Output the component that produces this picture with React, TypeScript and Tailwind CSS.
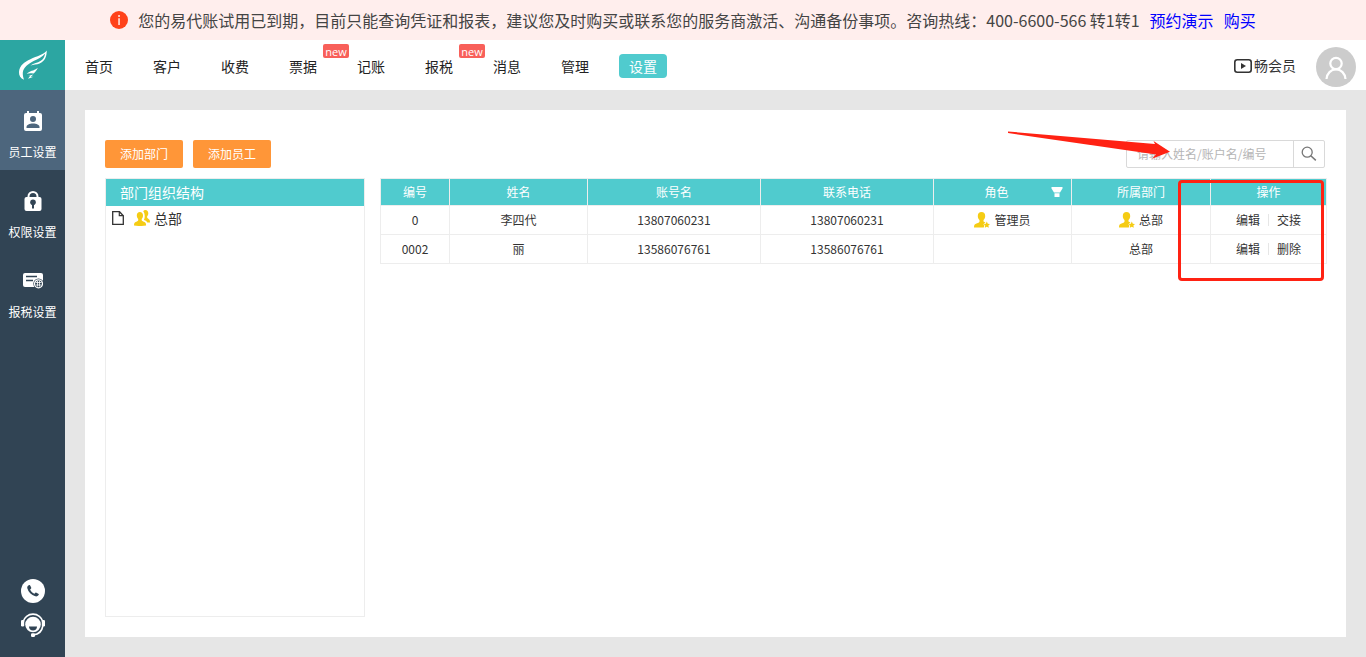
import { useState } from "react";
import type { ReactNode } from "react";

type NavItem = { label: string; isNew?: boolean };

type Employee = {
  code: string;
  name: string;
  account: string;
  phone: string;
  role: string;
  department: string;
  isManager: boolean;
  actions: string[];
};

const NAV_ITEMS: NavItem[] = [
  { label: "首页" },
  { label: "客户" },
  { label: "收费" },
  { label: "票据", isNew: true },
  { label: "记账" },
  { label: "报税", isNew: true },
  { label: "消息" },
  { label: "管理" },
  { label: "设置" },
];

const EMPLOYEES: Employee[] = [
  {
    code: "0",
    name: "李四代",
    account: "13807060231",
    phone: "13807060231",
    role: "管理员",
    department: "总部",
    isManager: true,
    actions: ["编辑", "交接"],
  },
  {
    code: "0002",
    name: "丽",
    account: "13586076761",
    phone: "13586076761",
    role: "",
    department: "总部",
    isManager: false,
    actions: ["编辑", "删除"],
  },
];

const LogoIcon = () => (
  <svg width="30" height="30" viewBox="0 0 30 30" fill="#fff" aria-hidden="true">
    <path d="M28.800 0.600C28.600 7 27 11.200 21.600 13.400C18.600 14.600 15.600 14.400 12.400 15.600C16 13.200 19.600 12.800 22.400 11C25.200 9.200 26.600 6.800 27.200 3.400C24.600 7 20 8.600 15.600 11C9.600 14.200 5.600 17.400 4.800 22.400C4.600 25 5.200 27 6 29.800C2.600 28.400 0.800 25.600 1 22C1.400 15.400 6.400 12 12.400 9.200C19 6.200 25.600 4.800 28.800 0.600Z" />
    <path d="M19.800 17.800C18.800 20.200 17.600 21.600 15.600 23.600L13.400 23.200C11.800 23 10.400 23.200 8.600 23.800C11 21.400 13.400 20.800 15.200 20.400C17 19.800 18.600 19 19.800 17.800Z" />
    <path d="M15.200 24.400L12.800 27L15.600 26.800L10 28.800L12.200 25.800L10 25.800C12 25.400 13.600 25 15.200 24.400Z" />
  </svg>
);

const StaffIcon = () => (
  <svg width="18" height="20" viewBox="0 0 18 20" aria-hidden="true">
    <path
      fill="#fff"
      d="M3 0h2v2h8V0h2v2h1a2 2 0 0 1 2 2v14a2 2 0 0 1-2 2H2a2 2 0 0 1-2-2V4a2 2 0 0 1 2-2h1z"
    />
    <circle cx="9" cy="8" r="3" fill="#4d667d" />
    <path fill="#4d667d" d="M2.500 17v-1c0-2 3-3.400 6.500-3.400s6.500 1.400 6.500 3.400v1z" />
  </svg>
);

const LockIcon = () => (
  <svg width="18" height="20" viewBox="0 0 18 20" aria-hidden="true">
    <path d="M4.500 8V5.500a4.500 4.500 0 0 1 9 0V8" fill="none" stroke="#fff" strokeWidth="2" />
    <rect x="0.500" y="6" width="17" height="14" rx="2" fill="#fff" />
    <circle cx="9" cy="11.300" r="2.800" fill="#314454" />
    <path d="M8 12h2v5.500H8z" fill="#314454" />
  </svg>
);

const TaxIcon = () => (
  <svg width="20" height="16" viewBox="0 0 20 16" aria-hidden="true">
    <rect width="20" height="14" rx="2" fill="#fff" />
    <path d="M3 3.500h11M3 7.500h7" stroke="#314454" strokeWidth="1.400" />
    <circle cx="15.500" cy="10.800" r="5.200" fill="#314454" />
    <circle cx="15.500" cy="10.800" r="4" fill="none" stroke="#fff" strokeWidth="1.200" />
    <path
      d="M12.500 9.500h6M12.500 12h6M14.500 8v5.600M16.500 8v5.600"
      stroke="#fff"
      strokeWidth="0.800"
    />
  </svg>
);

const PhoneIcon = () => (
  <svg width="24" height="24" viewBox="0 0 24 24" aria-hidden="true">
    <circle cx="12" cy="12" r="12" fill="#fff" />
    <path
      fill="#314454"
      d="M7.800 6.300c.6-.4 1.200-.2 1.500.4l.9 1.800c.2.500.1.900-.3 1.200l-.8.700c.7 1.900 2.300 3.500 4.300 4.300l.8-.8c.4-.3.800-.4 1.200-.2l1.900 1c.6.300.7.900.3 1.400-.8 1.100-2 1.600-3.300 1.200-4-1.200-6.900-4.200-8-8-.300-1.300.300-2.300 1.500-3z"
    />
  </svg>
);

const ServiceIcon = () => (
  <svg width="24" height="24" viewBox="0 0 24 24" aria-hidden="true">
    <circle cx="12" cy="11.500" r="7.800" fill="#fff" />
    <path d="M2 9a10.300 10.300 0 0 1 20 0" fill="none" stroke="#fff" strokeWidth="1.600" />
    <path d="M21.800 13c-.8 5-4.300 8.300-9.300 8.900" fill="none" stroke="#fff" strokeWidth="1.600" />
    <rect y="7" width="3.200" height="6.500" rx="1.200" fill="#fff" />
    <rect x="20.800" y="7" width="3.200" height="6.500" rx="1.200" fill="#fff" />
    <rect x="10" y="20.300" width="4" height="3.600" rx="1.200" fill="#fff" />
    <path d="M8 13.500h8c0 2.400-1.700 4-4 4s-4-1.600-4-4z" fill="#314454" />
  </svg>
);

const ManagerIcon = () => (
  <svg width="16" height="16" viewBox="0 0 16 16" fill="#f5cc14" aria-hidden="true">
    <path d="M7.500 0C9.800 0 11.200 1.500 11.200 4c0 1.700-.6 3.200-1.700 4.100v1.500c.6.500 1.300.7 1.900 1l-2 1.700 1 1.300-.6 2H0c0-2.200.4-3.300 2-3.900 1.400-.5 2.800-1 3.500-2V8.100C4.400 7.200 3.800 5.700 3.800 4c0-2.500 1.400-4 3.700-4z" />
    <path d="M12.800 9.500l1 2.200 2.200.3-1.600 1.500.4 2.300-2-1.100-2 1.100.4-2.300-1.600-1.500 2.200-.3z" />
  </svg>
);

const GroupIcon = () => (
  <svg width="16" height="16" viewBox="0 0 16 16" fill="#f5cc14" aria-hidden="true">
    <path d="M5.900 2c1.900 0 3.100 1.400 3.100 3.500 0 1.500-.5 2.700-1.300 3.500v1.200c.7 1 1.800 1.300 2.700 1.700 1.300.5 1.700 1.700 1.700 3.600-3.500.7-8.600.7-12.100 0 0-1.900.4-3.100 1.700-3.600 1-.4 2-.7 2.500-1.700V9c-.8-.8-1.400-2-1.400-3.500C2.800 3.400 4 2 5.900 2z" />
    <path d="M9.200 1.200C9.800.4 10.500 0 11.400 0c1.800 0 2.900 1.300 2.900 3.300 0 1.300-.5 2.400-1.200 3.200v1c.5.900 1.100 1.200 1.800 1.700.9.600 1.100 1.600 1.100 3.400h-2.700c-.4-1-1.200-1.600-2-2-.6-.2-1-.4-1.400-.8.600-1.100.9-2.600.8-4.100-.1-1.900-.5-3.400-1.500-4.500z" />
  </svg>
);

const FileIcon = () => (
  <svg width="12" height="14" viewBox="0 0 12 14" aria-hidden="true">
    <path d="M.7.700h6.800l3.800 4v8.600H.7z" fill="none" stroke="#333" strokeWidth="1.300" />
    <path d="M7.300.700v4h4" fill="none" stroke="#333" strokeWidth="1.200" />
  </svg>
);

const SearchIcon = () => (
  <svg width="16" height="16" viewBox="0 0 16 16" fill="none" stroke="#777" aria-hidden="true">
    <circle cx="6.200" cy="6.200" r="5" strokeWidth="1.300" />
    <path d="M9.800 9.800l5 4.600" strokeWidth="1.500" />
  </svg>
);

const SideLink = ({
  label,
  active,
  children,
}: {
  label: string;
  active?: boolean;
  children: ReactNode;
}) => (
  <a
    href="#"
    className={`flex h-20 flex-col items-center pt-[19px] text-xs text-white ${active ? "bg-[#4d667d]" : ""}`}
  >
    <span className="flex h-6 items-center">{children}</span>
    <span className="mt-[11px] leading-4">{label}</span>
  </a>
);

const CELL = "border border-[#ededed] text-center";

const App = () => {
  const [activeNav, setActiveNav] = useState("设置");
  const [keyword, setKeyword] = useState("");

  return (
    <div className="flex min-h-screen flex-col bg-[#e6e6e6] font-['Noto_Sans_CJK_SC',sans-serif] text-xs text-[#333]">
      <div className="flex h-10 items-center justify-center bg-[#ffeeed] text-base whitespace-nowrap text-[#444]">
        <svg width="18" height="18" viewBox="0 0 18 18" className="mr-2.5" aria-hidden="true">
          <circle cx="9" cy="9" r="9" fill="#ff421a" />
          <path d="M8.200 4h1.700v2H8.200zM8.200 7.300h1.700V14H8.200z" fill="#ffd9d2" />
        </svg>
        <p>
          您的易代账试用已到期，目前只能查询凭证和报表，建议您及时购买或联系您的服务商激活、沟通备份事项。咨询热线：400-6600-566
          转1转1
        </p>
        <a href="#" className="ml-2.5 text-[#0000ff]">
          预约演示
        </a>
        <a href="#" className="ml-2.5 text-[#0000ff]">
          购买
        </a>
      </div>

      <div className="flex flex-1">
        <aside className="flex w-[65px] shrink-0 flex-col bg-[#314454]">
          <a
            href="#"
            aria-label="首页"
            className="flex h-[50px] items-center justify-center bg-[#2ca6a2]"
          >
            <LogoIcon />
          </a>
          <SideLink label="员工设置" active>
            <StaffIcon />
          </SideLink>
          <SideLink label="权限设置">
            <LockIcon />
          </SideLink>
          <SideLink label="报税设置">
            <TaxIcon />
          </SideLink>
          <div className="mt-auto flex flex-col items-center gap-2.5 pb-5">
            <button type="button" aria-label="电话">
              <PhoneIcon />
            </button>
            <button type="button" aria-label="客服">
              <ServiceIcon />
            </button>
          </div>
        </aside>

        <div className="flex min-w-0 flex-1 flex-col">
          <header className="flex h-[50px] items-center justify-between bg-white px-2.5">
            <nav className="flex gap-5 pt-0.5 text-sm text-[#222]">
              {NAV_ITEMS.map((item) => (
                <button
                  key={item.label}
                  type="button"
                  onClick={() => setActiveNav(item.label)}
                  className={`relative h-6 rounded-sm px-2.5 leading-[22px] ${
                    item.label === activeNav ? "bg-[#50cbce] text-white" : ""
                  }`}
                >
                  {item.label}
                  {item.isNew && (
                    <span className="absolute -top-2.5 left-full -ml-1 h-3.5 w-[26px] rounded-xs bg-[#f8605a] text-center font-['Open_Sans',sans-serif] text-[11px] leading-[15px] text-white">
                      new
                    </span>
                  )}
                </button>
              ))}
            </nav>
            <div className="flex items-center gap-5">
              <a href="#" className="flex items-center gap-0.5 text-sm">
                <svg width="18" height="14" viewBox="0 0 18 14" className="mt-0.5" aria-hidden="true">
                  <rect
                    x="0.800"
                    y="0.800"
                    width="16.400"
                    height="12.400"
                    rx="2.500"
                    fill="none"
                    stroke="#333"
                    strokeWidth="1.600"
                  />
                  <path d="M7 4l5 3-5 3z" fill="#333" />
                </svg>
                畅会员
              </a>
              <button type="button" aria-label="个人中心" className="mt-1">
                <svg width="40" height="40" viewBox="0 0 40 40" aria-hidden="true">
                  <circle cx="20" cy="20" r="20" fill="#ccc" />
                  <g fill="none" stroke="#fff" strokeWidth="2.200">
                    <circle cx="20" cy="16.500" r="5.700" />
                    <path d="M10.500 32c.4-5.500 4.400-9.600 9.500-9.600s9.100 4.100 9.500 9.600" />
                  </g>
                </svg>
              </button>
            </div>
          </header>

          <main className="relative m-5 flex flex-1 flex-col bg-white px-5 pt-[30px] pb-5">
            <div className="flex items-center justify-between">
              <div className="flex gap-2.5">
                <button type="button" className="h-7 w-[78px] rounded-xs bg-[#ff9638] text-white">
                  添加部门
                </button>
                <button type="button" className="h-7 w-[78px] rounded-xs bg-[#ff9638] text-white">
                  添加员工
                </button>
              </div>
              <form
                className="mr-px flex h-7 w-[199px] rounded-xs border border-[#d9d9d9]"
                onSubmit={(event) => event.preventDefault()}
              >
                <input
                  type="text"
                  aria-label="搜索员工"
                  placeholder="请输入姓名/账户名/编号"
                  value={keyword}
                  onChange={(event) => setKeyword(event.target.value)}
                  className="min-w-0 flex-1 px-2.5 outline-none placeholder:text-[#b5b5b5]"
                />
                <button
                  type="submit"
                  aria-label="搜索"
                  className="flex w-[31px] items-center justify-center border-l border-[#d9d9d9]"
                >
                  <SearchIcon />
                </button>
              </form>
            </div>

            <div className="mt-2.5 flex flex-1 gap-[15px]">
              <section className="w-[260px] shrink-0 border border-[#ededed]">
                <h2 className="h-[27px] bg-[#50cbce] px-3.5 text-sm leading-[27px] text-white">
                  部门组织结构
                </h2>
                <div className="flex h-6 items-center px-1.5 text-sm">
                  <FileIcon />
                  <span className="mr-1 ml-2.5">
                    <GroupIcon />
                  </span>
                  总部
                </div>
              </section>

              <div className="min-w-0 flex-1">
                <table className="w-full table-fixed border-collapse">
                  <colgroup>
                    <col className="w-[69px]" />
                    <col className="w-[138px]" />
                    <col className="w-[173px]" />
                    <col className="w-[173px]" />
                    <col className="w-[138px]" />
                    <col className="w-[139px]" />
                    <col className="w-[116px]" />
                  </colgroup>
                  <thead>
                    <tr className="h-[27px] bg-[#50cbce] text-white">
                      <th className={`${CELL} font-normal`}>编号</th>
                      <th className={`${CELL} font-normal`}>姓名</th>
                      <th className={`${CELL} font-normal`}>账号名</th>
                      <th className={`${CELL} font-normal`}>联系电话</th>
                      <th className={`${CELL} font-normal`}>
                        <div className="flex items-center pr-2">
                          <span className="flex-1 pl-2">角色</span>
                          <button type="button" aria-label="筛选角色">
                            <svg width="12" height="10" viewBox="0 0 12 10" aria-hidden="true">
                              <path
                                d="M0.500 0h11v1.500L9 5.500H3L0.500 1.500zM3.500 6.200h5V10h-5z"
                                fill="#fff"
                              />
                            </svg>
                          </button>
                        </div>
                      </th>
                      <th className={`${CELL} font-normal`}>所属部门</th>
                      <th className={`${CELL} font-normal`}>操作</th>
                    </tr>
                  </thead>
                  <tbody>
                    {EMPLOYEES.map((employee) => (
                      <tr key={employee.code} className="h-[29px]">
                        <td className={CELL}>{employee.code}</td>
                        <td className={CELL}>{employee.name}</td>
                        <td className={CELL}>{employee.account}</td>
                        <td className={CELL}>{employee.phone}</td>
                        <td className={CELL}>
                          {employee.role && (
                            <div className="flex items-center justify-center gap-1">
                              <ManagerIcon />
                              {employee.role}
                            </div>
                          )}
                        </td>
                        <td className={CELL}>
                          <div className="flex items-center justify-center gap-1">
                            {employee.isManager && <ManagerIcon />}
                            {employee.department}
                          </div>
                        </td>
                        <td className={CELL}>
                          <div className="flex items-center justify-center divide-x divide-[#e6e6e6] leading-3">
                            {employee.actions.map((action) => (
                              <button key={action} type="button" className="px-2">
                                {action}
                              </button>
                            ))}
                          </div>
                        </td>
                      </tr>
                    ))}
                  </tbody>
                </table>
              </div>
            </div>

            {/* guide marks over the search box and the action column */}
            <svg
              width="164"
              height="30"
              viewBox="0 0 164 30"
              className="pointer-events-none absolute top-5 right-[175px]"
              aria-hidden="true"
            >
              <path d="M1 1.500L148 14l-1.500-3L163 21.700 145 28.700l4-4.200L1 3z" fill="#ff2213" />
            </svg>
            <div className="pointer-events-none absolute top-[70px] right-[22px] h-[101px] w-[146px] rounded-sm border-3 border-[#ff2213]" />
          </main>
        </div>
      </div>
    </div>
  );
};

export default App;
